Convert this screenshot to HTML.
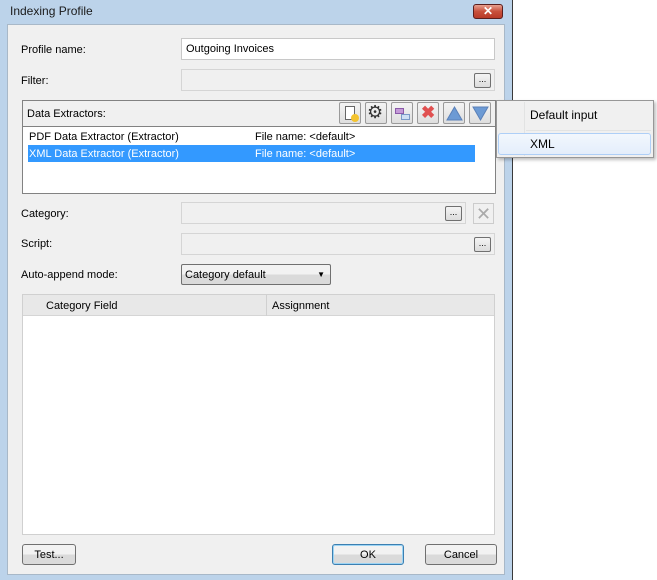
<!DOCTYPE html>
<html><head><style>
*{margin:0;padding:0;box-sizing:border-box}
body{width:657px;height:580px;background:#fff;font-family:"Liberation Sans",sans-serif;font-size:11px;color:#000;position:relative;overflow:hidden}
.a{position:absolute}
.frame{left:0;top:0;width:513px;height:580px;background:#bcd3ea;border-right:1px solid #3a3a3a}
.title{left:10px;top:4px;font-size:12px;color:#1a1a1a}
.client{left:7px;top:24px;width:498px;height:551px;background:#f0f0f0;border:1px solid #a8b8c8}
.lbl{position:absolute;font-size:11px}
.tb{position:absolute;border:1px solid #d5d5d5;background:#f0f0f0;height:22px}
.tbw{background:#fff;border-color:#c8c8c8}
.dots{position:absolute;width:17px;height:15px;border:1px solid #707070;border-radius:2px;background:linear-gradient(#f4f4f4,#dcdcdc);font-size:9px;text-align:center;line-height:10px}
.btn{position:absolute;height:21px;border:1px solid #707070;border-radius:3px;background:linear-gradient(#f2f2f2 50%,#dadada 50%);text-align:center;line-height:20px;font-size:11px}
.ib{position:absolute;top:102px;width:22px;height:22px;border:1px solid #9a9a9a;border-radius:2px;background:linear-gradient(#f4f4f4,#dedede)}
</style></head><body>
<div class="a frame"></div>
<div class="a title">Indexing Profile</div>
<div class="a" style="left:473px;top:4px;width:30px;height:15px;border:1px solid #5a1e1e;border-radius:3px;background:linear-gradient(#e8a090,#c8503c 50%,#b83a28);color:#fff;font-weight:bold;font-size:12px;text-align:center;line-height:13px">✕</div>
<div class="a client"></div>

<div class="lbl" style="left:21px;top:44px">Profile name:</div>
<div class="tb tbw" style="left:181px;top:38px;width:314px"></div>
<div class="lbl" style="left:186px;top:43px">Outgoing Invoices</div>

<div class="lbl" style="left:21px;top:75px">Filter:</div>
<div class="tb" style="left:181px;top:69px;width:314px"></div>
<div class="dots" style="left:474px;top:73px">...</div>

<div class="a" style="left:22px;top:100px;width:474px;height:94px;border:1px solid #828282;background:#f0f0f0"></div>
<div class="lbl" style="left:27px;top:108px">Data Extractors:</div>
<div class="a" style="left:23px;top:126px;width:472px;height:67px;background:#fff;border-top:1px solid #828282"></div>
<div class="lbl" style="left:29px;top:131px">PDF Data Extractor (Extractor)</div>
<div class="lbl" style="left:255px;top:131px">File name: &lt;default&gt;</div>
<div class="a" style="left:28px;top:145px;width:447px;height:17px;background:#3399ff"></div>
<div class="lbl" style="left:29px;top:148px;color:#fff">XML Data Extractor (Extractor)</div>
<div class="lbl" style="left:255px;top:148px;color:#fff">File name: &lt;default&gt;</div>

<div class="ib" style="left:339px"><div class="a" style="left:5px;top:3px;width:10px;height:14px;border:1px solid #666;background:#fff"></div><div class="a" style="left:11px;top:11px;width:8px;height:8px;border-radius:50%;background:#f4c430"></div></div>
<div class="ib" style="left:365px"><div class="a" style="left:1px;top:-1px;font-size:18px;color:#333">⚙</div></div>
<div class="ib" style="left:391px"><div class="a" style="left:3px;top:5px;width:9px;height:6px;background:#c49ad8;border:1px solid #8a5aa8"></div><div class="a" style="left:9px;top:11px;width:9px;height:6px;background:#cfe0f4;border:1px solid #7a9ac8"></div></div>
<div class="ib" style="left:417px"><div class="a" style="left:3px;top:0px;font-size:17px;color:#e05050;font-weight:bold">✖</div></div>
<div class="ib" style="left:443px"><svg class="a" style="left:2px;top:3px" width="17" height="15"><polygon points="8.5,1 16,14 1,14" fill="#6c9ad4" stroke="#5a80b8"/></svg></div>
<div class="ib" style="left:469px"><svg class="a" style="left:2px;top:3px" width="17" height="15"><polygon points="1,1 16,1 8.5,14" fill="#6c9ad4" stroke="#5a80b8"/></svg></div>

<div class="lbl" style="left:21px;top:208px">Category:</div>
<div class="tb" style="left:181px;top:202px;width:285px"></div>
<div class="dots" style="left:445px;top:206px">...</div>
<div class="a" style="left:473px;top:203px;width:21px;height:21px;border:1px solid #ccc;background:#f0f0f0;color:#aaa;font-size:18px;text-align:center;line-height:20px">✕</div>

<div class="lbl" style="left:21px;top:238px">Script:</div>
<div class="tb" style="left:181px;top:233px;width:314px"></div>
<div class="dots" style="left:474px;top:237px">...</div>

<div class="lbl" style="left:21px;top:269px">Auto-append mode:</div>
<div class="btn" style="left:181px;top:264px;width:150px;text-align:left;padding-left:3px;border-radius:2px">Category default<span style="position:absolute;right:5px;top:0;font-size:8px">▼</span></div>

<div class="a" style="left:22px;top:294px;width:473px;height:241px;background:#fff;border:1px solid #d0d0d0"></div>
<div class="a" style="left:23px;top:295px;width:471px;height:21px;background:#e8e8e8;border-bottom:1px solid #d5d5d5"></div>
<div class="a" style="left:266px;top:295px;width:1px;height:21px;background:#d0d0d0"></div>
<div class="lbl" style="left:46px;top:300px">Category Field</div>
<div class="lbl" style="left:272px;top:300px">Assignment</div>

<div class="btn" style="left:22px;top:544px;width:54px">Test...</div>
<div class="btn" style="left:332px;top:544px;width:72px;border-color:#3c7fb1;box-shadow:inset 0 0 0 1px #9cd4f4">OK</div>
<div class="btn" style="left:425px;top:544px;width:72px">Cancel</div>

<div class="a" style="left:496px;top:100px;width:158px;height:58px;background:#f0f0f0;border:1px solid #979797;box-shadow:2px 2px 3px rgba(0,0,0,.25)"></div>
<div class="a" style="left:524px;top:102px;width:1px;height:54px;background:#e2e3e3"></div>
<div class="a" style="left:526px;top:130px;width:125px;height:1px;background:#e2e3e3"></div>
<div class="lbl" style="left:530px;top:108px;font-size:12px">Default input</div>
<div class="a" style="left:498px;top:133px;width:153px;height:22px;border:1px solid #aecff7;border-radius:3px;background:linear-gradient(#f2f7fd,#e4eefb)"></div>
<div class="lbl" style="left:530px;top:137px;font-size:12px">XML</div>
</body></html>
